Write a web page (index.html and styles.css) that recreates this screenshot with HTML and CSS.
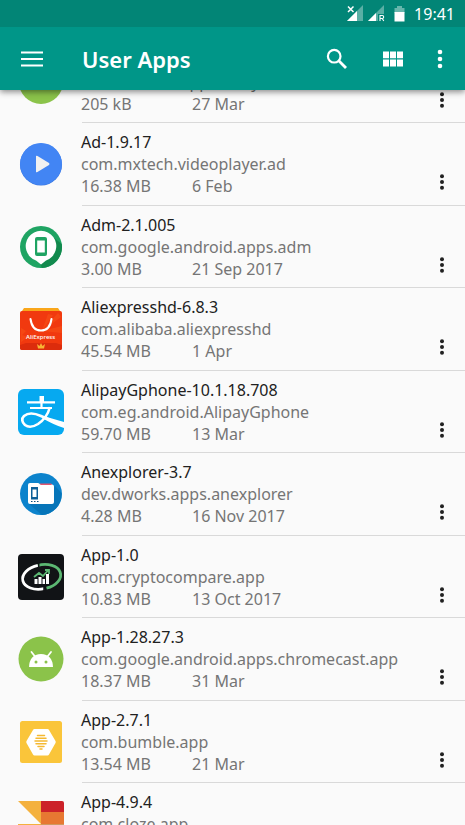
FILE: index.html
```html
<!DOCTYPE html>
<html lang="en">
<head>
<meta charset="utf-8">
<meta name="viewport" content="width=device-width, initial-scale=1">
<title>User Apps</title>
<link rel="stylesheet" href="styles.css">
</head>
<body>
<svg class="defs" aria-hidden="true">
  <symbol id="dots" viewBox="0 0 6 18"><circle cx="3" cy="3.2" r="2"/><circle cx="3" cy="9" r="2"/><circle cx="3" cy="14.8" r="2"/></symbol>
</svg>
<header class="top">
  <div class="status">
    <svg width="16" height="17" viewBox="0 0 16 17" role="img" aria-label="No signal"><path d="M16 0V16H0z" fill="#fff" opacity=".35"/><path d="M10 6V16H0z" fill="#fff"/><path d="M0 0H8V8H0z" fill="#028576"/><path d="M1 1.500L6.500 7M6.500 1.500L1 7" stroke="#fff" stroke-width="1.500"/></svg>
    <svg width="17" height="17" viewBox="0 0 17 17" role="img" aria-label="Roaming signal"><path d="M16 0V16H0z" fill="#fff" opacity=".35"/><path d="M8 8V16H0z" fill="#fff"/><path d="M10 9H17V17H10z" fill="#028576"/><path d="M12 16V10.500H14.300Q15.700 10.500 15.700 12T14.300 13.500H12M14.200 13.500L15.800 16" fill="none" stroke="#fff" stroke-width="1.100"/></svg>
    <svg class="battery" width="11" height="16" viewBox="0 0 11 16" role="img" aria-label="Battery"><path d="M3 0H8V2H10.500V7H.5V2H3z" fill="#fff" opacity=".4"/><path d="M.5 6H10.500V15.500H.5z" fill="#fff"/></svg>
    <time>19:41</time>
  </div>
  <div class="toolbar">
    <button class="tool menu" aria-label="Open menu"><svg width="22" height="16" viewBox="0 0 22 16"><path d="M0 1.500H22M0 8H22M0 14.500H22" stroke="#fff" stroke-width="2"/></svg></button>
    <h1>User Apps</h1>
    <button class="tool" aria-label="Search"><svg width="22" height="22" viewBox="0 0 22 22"><circle cx="8.200" cy="8.200" r="6.300" fill="none" stroke="#fff" stroke-width="2.200"/><path d="M12.800 12.800L20 20" stroke="#fff" stroke-width="2.800"/></svg></button>
    <button class="tool" aria-label="Grid view"><svg width="20" height="16" viewBox="0 0 20 16"><path d="M0 .5H6V7.300H0zM7 .5H13V7.300H7zM14 .5H20V7.300H14zM0 8.500H6V15.500H0zM7 8.500H13V15.500H7zM14 8.500H20V15.500H14z" fill="#fff"/></svg></button>
    <button class="tool more" aria-label="More options"><svg width="6" height="20" viewBox="0 0 6 20"><g fill="#fff"><circle cx="3" cy="3" r="2.300"/><circle cx="3" cy="10" r="2.300"/><circle cx="3" cy="17" r="2.300"/></g></svg></button>
  </div>
</header>
<main>
<ul class="apps">
  <li class="app">
    <svg class="icon" viewBox="0 0 46 46"><circle cx="23" cy="23" r="22" fill="#8bc34a"/></svg>
    <div class="info"><h2></h2><p>com.android.app.family</p><p class="meta"><span>205 kB</span><span>27 Mar</span></p></div>
    <button class="dots" aria-label="App options"><svg><use href="#dots"/></svg></button>
  </li>
  <li class="app">
    <svg class="icon" viewBox="0 0 46 46"><circle cx="23" cy="23.500" r="21" fill="#3974dc"/><circle cx="23" cy="23" r="21" fill="#4285f4"/><path d="M19 15.500L31.500 23.500L19 31.500z" fill="#2d66c9" opacity=".5"/><path d="M18 15Q18.500 14.500 19.500 15L31 22Q32 23 31 24L19.500 31Q18.500 31.500 18 31z" fill="#f1f1f1"/></svg>
    <div class="info"><h2>Ad-1.9.17</h2><p>com.mxtech.videoplayer.ad</p><p class="meta"><span>16.38 MB</span><span>6 Feb</span></p></div>
    <button class="dots" aria-label="App options"><svg><use href="#dots"/></svg></button>
  </li>
  <li class="app">
    <svg class="icon" viewBox="0 0 46 46"><circle cx="23" cy="23" r="21" fill="#1fa463"/><path d="M33.500 12L43.800 20A21 21 0 0 1 24 44L22 40L34 32z" fill="#128a4e"/><path d="M23 40.500L18 36.500A15.300 15.300 0 1 1 28 36.500z" fill="#fff"/><path d="M19 13H27Q29 13 29 15V30Q29 32 27 32H19Q17 32 17 30V15Q17 13 19 13zM19.200 16.500V28.500H26.800V16.500z" fill="#1fa463" fill-rule="evenodd"/></svg>
    <div class="info"><h2>Adm-2.1.005</h2><p>com.google.android.apps.adm</p><p class="meta"><span>3.00 MB</span><span>21 Sep 2017</span></p></div>
    <button class="dots" aria-label="App options"><svg><use href="#dots"/></svg></button>
  </li>
  <li class="app">
    <svg class="icon" viewBox="0 0 46 46"><path d="M6 2H40L44 8H2z" fill="#f9a61a"/><path d="M2 7Q2 5 4 5H42Q44 5 44 7V42Q44 44 42 44H4Q2 44 2 42z" fill="#f1390f"/><path d="M24 25L40 7L43 11L24 25L44 20V27zM24 25L30 8L35 9zM3 22L8 25L4 29L10 31L3 36z" fill="#ff6a1e" opacity=".3"/><path d="M2 39L8 37H38L44 39V42Q44 44 42 44H4Q2 44 2 42z" fill="#dc2c0c"/><path d="M12.500 13Q14 24.500 23 24.500T33.500 13" fill="none" stroke="#fff" stroke-width="2" stroke-linecap="round"/><text x="8" y="33" class="brand">AliExpress</text><path d="M19 38L21.500 40L23 37L24.500 40L27 38L26 42.500H20z" fill="#f8b333"/></svg>
    <div class="info"><h2>Aliexpresshd-6.8.3</h2><p>com.alibaba.aliexpresshd</p><p class="meta"><span>45.54 MB</span><span>1 Apr</span></p></div>
    <button class="dots" aria-label="App options"><svg><use href="#dots"/></svg></button>
  </li>
  <li class="app">
    <svg class="icon" viewBox="0 0 46 46"><rect x="0" y="0" width="46" height="46" rx="6" fill="#06a9f0"/><path d="M9 13.300H37M12 19H34M23.500 7V19" fill="none" stroke="#fff" stroke-width="2.200"/><path d="M21.500 7H26V14H21.500z" fill="#fff"/><path d="M32 18Q29 29 20 35Q12 40 7 36Q2 31 6 27Q12 22 23 27Q33 32 45.500 36" fill="none" stroke="#fff" stroke-width="2.600"/><path d="M27 27.500L46 33V39Q36 36 24 29z" fill="#fff"/></svg>
    <div class="info"><h2>AlipayGphone-10.1.18.708</h2><p>com.eg.android.AlipayGphone</p><p class="meta"><span>59.70 MB</span><span>13 Mar</span></p></div>
    <button class="dots" aria-label="App options"><svg><use href="#dots"/></svg></button>
  </li>
  <li class="app">
    <svg class="icon" viewBox="0 0 46 46"><circle cx="23" cy="23" r="21" fill="#0c83cc"/><path d="M37 15L43.500 22A21 21 0 0 1 24 44L11 33z" fill="#0675b9"/><path d="M22 12.500H33Q34 12.500 34 14V18H22z" fill="#e05770"/><path d="M10 14Q10 12 12 12H20Q21.500 12 22 13.500H34Q36 13.500 36 15.500V31Q36 33 34 33H12Q10 33 10 31z" fill="#fff"/><path d="M22 13H33L34 14H23z" fill="#e05770"/><path d="M13 16H20V28.500H13zM14.500 18.500V26H18.500V18.500z" fill="#0d5f97" fill-rule="evenodd"/><path d="M13 30.500H14.500M16 30.500H17.500M19 30.500H20.500" stroke="#0d4f7c"/></svg>
    <div class="info"><h2>Anexplorer-3.7</h2><p>dev.dworks.apps.anexplorer</p><p class="meta"><span>4.28 MB</span><span>16 Nov 2017</span></p></div>
    <button class="dots" aria-label="App options"><svg><use href="#dots"/></svg></button>
  </li>
  <li class="app">
    <svg class="icon" viewBox="0 0 46 46"><rect width="46" height="46" rx="4" fill="#111316"/><g transform="rotate(-10 23 23)" fill="none" stroke-width="2.800"><path d="M22 11A18.500 12 0 1 0 24 35" stroke="#fff"/><path d="M22 11A18.500 12 0 1 1 26.500 35" stroke="#5cb873"/></g><path d="M20.700 8V14M26 31V38" stroke="#111316" stroke-width="1.500"/><path d="M16.500 30V25H19.500V30zM20.500 30V23H23.500V30zM24.500 30V25H27V30zM28 30V20H31V30z" fill="#fff"/><path d="M16 23L21 19L25 22L30 16.500M27 16H31V20" fill="none" stroke="#5cb873" stroke-width="1.800"/></svg>
    <div class="info"><h2>App-1.0</h2><p>com.cryptocompare.app</p><p class="meta"><span>10.83 MB</span><span>13 Oct 2017</span></p></div>
    <button class="dots" aria-label="App options"><svg><use href="#dots"/></svg></button>
  </li>
  <li class="app">
    <svg class="icon" viewBox="0 0 46 46"><circle cx="23" cy="23" r="22.500" fill="#8bc34a"/><path d="M11 31Q11.500 18.500 23 18Q34.500 18.500 35 31z" fill="#fff"/><path d="M13.500 16L17 20.500M33 16L29.500 20.500" stroke="#fff" stroke-width="1.800" stroke-linecap="round"/><circle cx="18" cy="26" r="1.500" fill="#8bc34a"/><circle cx="28" cy="26" r="1.500" fill="#8bc34a"/></svg>
    <div class="info"><h2>App-1.28.27.3</h2><p>com.google.android.apps.chromecast.app</p><p class="meta"><span>18.37 MB</span><span>31 Mar</span></p></div>
    <button class="dots" aria-label="App options"><svg><use href="#dots"/></svg></button>
  </li>
  <li class="app">
    <svg class="icon" viewBox="0 0 46 46"><rect x="2" y="2" width="42" height="42" rx="2.500" fill="#fac53a"/><path d="M16.500 10H29.500Q30.500 10 31 11L37.500 22Q38 23 37.500 24L31 35.500Q30.500 36.500 29.500 36.500H16.500Q15.500 36.500 15 35.500L8.500 24Q8 23 8.500 22L15 11Q15.500 10 16.500 10z" fill="#fff"/><path d="M19.500 16.500H26.500M18 19.200H28M17 22H29M18 24.800H28M20 27.500H26M22 30H24" stroke="#f5b931" stroke-width="1.500" stroke-linecap="round"/></svg>
    <div class="info"><h2>App-2.7.1</h2><p>com.bumble.app</p><p class="meta"><span>13.54 MB</span><span>21 Mar</span></p></div>
    <button class="dots" aria-label="App options"><svg><use href="#dots"/></svg></button>
  </li>
  <li class="app">
    <svg class="icon" viewBox="0 0 46 46"><path d="M0 0H23V23z" fill="#f4b13e"/><path d="M23 0H44Q46 0 46 2V11H23z" fill="#cc2229"/><path d="M23 11H46V23H23z" fill="#e77832"/><path d="M0 23H23V46H0z" fill="#f4b13e"/><path d="M23 23H46V46H23z" fill="#cf9a5f"/></svg>
    <div class="info"><h2>App-4.9.4</h2><p>com.cloze.app</p></div>
  </li>
</ul>
</main>
</body>
</html>
```
FILE: styles.css
```css
* { box-sizing: border-box; }
html, body { height: 100%; }
body {
  margin: 0;
  display: flex;
  flex-direction: column;
  overflow: hidden;
  background: #fafafa;
  color: #212121;
  font-family: "Noto Sans", "Open Sans", sans-serif;
  font-size: 16px;
  line-height: 22px;
}
h1, h2, p, ul { margin: 0; padding: 0; font-size: inherit; font-weight: 400; }
ul { list-style: none; }
svg { display: block; flex: none; }
button { border: 0; padding: 0; background: none; display: grid; place-items: center; }
.defs { display: none; }

.top {
  position: relative;
  z-index: 1;
  flex: none;
  background: #009688;
  color: #fff;
  box-shadow: 0 2px 6px rgba(0, 0, 0, .45);
}
.status {
  height: 27px;
  padding-right: 10px;
  display: flex;
  align-items: center;
  justify-content: flex-end;
  gap: 5px;
  background: #028576;
}
.battery { margin: 0 4px; }
.toolbar {
  height: 63px;
  padding-right: 6px;
  display: flex;
  align-items: center;
}
.toolbar h1 { flex: 1; font-size: 22px; font-weight: 600; line-height: 30px; }
.tool { width: 56px; height: 48px; }
.menu { width: 82px; padding-right: 19px; }
.more { width: 38px; }

main { flex: 1; min-height: 0; overflow: hidden; }
.apps { margin-top: -49px; }
.app {
  position: relative;
  height: 82px;
  display: grid;
  grid-template-columns: 81px 1fr 46px;
}
.app:nth-child(even) { height: 83px; }
.app:not(:last-child)::after {
  content: "";
  position: absolute;
  left: 82px;
  right: 0;
  bottom: 0;
  border-bottom: 1px solid #d9d9d9;
}
.icon { width: 46px; height: 46px; margin: 18px; }
.info { padding-top: 8px; color: #757575; white-space: nowrap; }
.info h2 { min-height: 22px; color: #212121; }
.meta { display: grid; grid-template-columns: 111px 1fr; }
.dots { height: 30px; margin-top: 44px; }
.dots svg { width: 6px; height: 18px; fill: #212121; }
.brand { font-size: 6px; font-weight: 500; fill: #fff; }
```
